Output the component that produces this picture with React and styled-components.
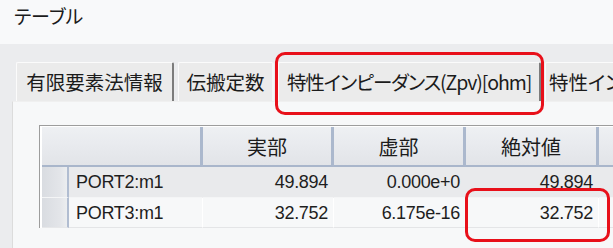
import React from 'react';
import styled, { createGlobalStyle } from 'styled-components';

const Global = createGlobalStyle`
  html, body { margin: 0; padding: 0; background: #ebecee; overflow: hidden; }
  body { font-family: "Noto Sans CJK JP", sans-serif; color: #1b1b1b; }
  * { box-sizing: border-box; }
`;

const Window = styled.div`
  position: relative;
  width: 613px;
  height: 248px;
  overflow: hidden;
  display: flex;
  flex-direction: column;
  background: #ebecee;
`;

const TitleBar = styled.div`
  flex: none;
  height: 44px;
  padding: 3px 0 0 14px;
  background: #f8f9fa;
  font-size: 19px;
  line-height: 26px;
  font-feature-settings: "palt";
`;

const Body = styled.div`
  flex: 1;
  display: flex;
  flex-direction: column;
  padding: 18px 0 0 12px;
`;

const TabStrip = styled.div`
  flex: none;
  display: flex;
  align-items: stretch;
  height: 39px;
  padding-left: 4px;
  gap: 4px;
  white-space: nowrap;
`;

const Tab = styled.div`
  flex: none;
  width: ${p => p.$w}px;
  display: flex;
  align-items: center;
  justify-content: ${p => (p.$start ? 'flex-start' : 'center')};
  padding-left: ${p => (p.$start ? 3 : 0)}px;
  background: #ebebeb;
  border-top: 1px solid #fbfbfb;
  border-left: 1px solid #fbfbfb;
  border-right: 2px solid ${p => (p.$shade ? '#7c7c7c' : '#f6f6f6')};
  border-radius: 2px 2px 0 0;
  font-size: 19.5px;
  line-height: 24px;
  letter-spacing: ${p => (p.$tight ? '-1.1px' : '0')};
  font-feature-settings: "palt";
  overflow: hidden;
`;

const Panel = styled.div`
  flex: 1;
  background: #f7f8f9;
  border-left: 1px solid #dcdcdc;
  border-top: 1px solid #f0f0f0;
  padding: 23px 0 0 26px;
`;

const Grid = styled.div`
  display: grid;
  grid-template-columns: 27px 134px 131px 132px 133px 80px;
  grid-template-rows: 40px 31px 30px;
  width: 700px;
  border-top: 1px solid #9d9d9d;
  border-left: 1px solid #9d9d9d;
  padding: 1px 0 0 2px;
  background: #ffffff;
`;

const HeadCell = styled.div`
  grid-column: span ${p => p.$span || 1};
  display: flex;
  align-items: center;
  justify-content: center;
  padding-top: 1px;
  background: linear-gradient(#eef0f3, #e8eaee 50%, #e2e4e8);
  border-right: 3px solid #abb8cd;
  border-bottom: 2px solid #a9b6cb;
  font-size: 20px;
  line-height: 24px;
`;

const RowHead = styled.div`
  background: linear-gradient(90deg, #d9dce1, #e3e5e9 70%, #eceef0);
  border-right: 2px solid #b1bdd1;
  border-bottom: 1px solid ${p => (p.$alt ? '#e6e7e9' : '#f4f5f6')};
`;

const Cell = styled.div`
  display: flex;
  align-items: center;
  justify-content: ${p => (p.$num ? 'flex-end' : 'flex-start')};
  padding: ${p => (p.$num ? '1px 5px 0 0' : '1px 0 0 7px')};
  background: ${p => (p.$alt ? '#f7f8f9' : '#e9eaec')};
  border-right: 1px solid ${p => (p.$alt ? '#ffffff' : '#e9eaec')};
  border-bottom: 1px solid ${p => (p.$alt ? '#e4e5e7' : '#f4f5f6')};
  font-family: "Liberation Sans", Arial, sans-serif;
  font-size: 18px;
  letter-spacing: -0.3px;
  color: #1e1e1e;
  white-space: nowrap;
`;

const Highlight = styled.div`
  position: absolute;
  left: ${p => p.$x}px;
  top: ${p => p.$y}px;
  width: ${p => p.$w}px;
  height: ${p => p.$h}px;
  border: 3px solid #e8101a;
  border-radius: 10px;
  pointer-events: none;
`;

const rows = [
  { name: 'PORT2:m1', re: '49.894', im: '0.000e+0', abs: '49.894' },
  { name: 'PORT3:m1', re: '32.752', im: '6.175e-16', abs: '32.752' },
];

export default function App() {
  return (
    <Window>
      <Global />
      <TitleBar>テーブル</TitleBar>
      <Body>
        <TabStrip>
          <Tab $w={158} $shade>有限要素法情報</Tab>
          <Tab $w={96}>伝搬定数</Tab>
          <Tab $w={263} $shade $tight>特性インピーダンス(Zpv)[ohm]</Tab>
          <Tab $w={120} $start>特性インピーダンス</Tab>
        </TabStrip>
        <Panel>
          <Grid>
            <HeadCell $span={2} />
            <HeadCell>実部</HeadCell>
            <HeadCell>虚部</HeadCell>
            <HeadCell>絶対値</HeadCell>
            <HeadCell />
            {rows.map((r, i) => (
              <React.Fragment key={r.name}>
                <RowHead $alt={i === 1} />
                <Cell $alt={i === 1}>{r.name}</Cell>
                <Cell $alt={i === 1} $num>{r.re}</Cell>
                <Cell $alt={i === 1} $num>{r.im}</Cell>
                <Cell $alt={i === 1} $num>{r.abs}</Cell>
                <Cell $alt={i === 1} />
              </React.Fragment>
            ))}
          </Grid>
        </Panel>
      </Body>
      <Highlight $x={275} $y={52} $w={269} $h={63} />
      <Highlight $x={465} $y={188} $w={145} $h={54} />
    </Window>
  );
}
